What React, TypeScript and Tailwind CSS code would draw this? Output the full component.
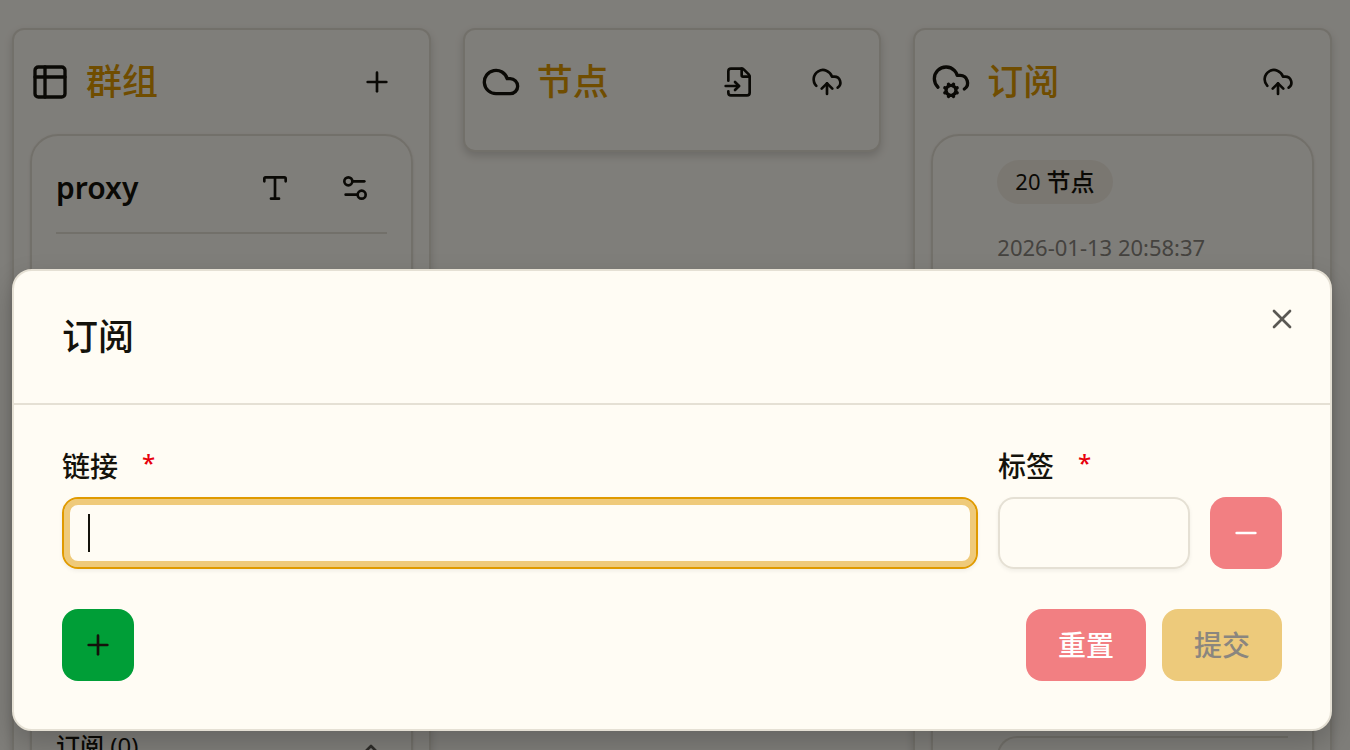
import type { ReactNode } from "react";
import {
  ChevronUp,
  Cloud,
  CloudCog,
  CloudUpload,
  FileInput,
  Minus,
  Plus,
  Settings2,
  Type,
  X,
} from "lucide-react";

function GroupIcon() {
  return (
    <svg
      viewBox="0 0 24 24"
      className="size-10"
      fill="none"
      stroke="currentColor"
      strokeWidth={2}
      strokeLinecap="round"
      strokeLinejoin="round"
      aria-hidden="true"
    >
      <rect x="3" y="3" width="18" height="18" rx="2" />
      <path d="M3 9h18" />
      <path d="M9 3v18" />
    </svg>
  );
}

function IconButton({ label, children }: { label: string; children: ReactNode }) {
  return (
    <button
      type="button"
      aria-label={label}
      className="flex size-[72px] items-center justify-center rounded-2xl"
    >
      {children}
    </button>
  );
}

function Column({
  icon,
  title,
  actions,
  children,
}: {
  icon: ReactNode;
  title: string;
  actions: ReactNode;
  children?: ReactNode;
}) {
  return (
    <section className="rounded-xl border-2 border-[#e5e0d4] bg-[#fffcf4] px-4 pb-4 shadow-[0_4px_8px_rgba(0,0,0,0.16)]">
      <div className="flex items-center justify-between py-4">
        <div className="flex items-center gap-4">
          {icon}
          <h2 className="text-4xl font-medium text-[#e09a00]">{title}</h2>
        </div>
        <div className="flex items-center gap-4">{actions}</div>
      </div>
      {children}
    </section>
  );
}

function FieldLabel({ htmlFor, children }: { htmlFor: string; children: ReactNode }) {
  return (
    <label htmlFor={htmlFor} className="flex gap-6 text-[28px] leading-[26px] font-medium">
      {children}
      <span className="text-2xl leading-5 font-medium text-[#e7000b]">*</span>
    </label>
  );
}

function Dialog() {
  return (
    <div
      role="dialog"
      aria-labelledby="dialog-title"
      className="relative w-full rounded-[20px] border-2 border-[#e5e0d4] bg-[#fffcf4] shadow-[0_12px_28px_rgba(0,0,0,0.2)]"
    >
      <header className="border-b-2 border-[#e5e0d4] p-12">
        <h2 id="dialog-title" className="text-4xl leading-9 font-medium">
          订阅
        </h2>
      </header>
      <button type="button" aria-label="关闭" className="absolute top-8 right-8 text-[#5a5853]">
        <X className="size-8" />
      </button>

      <form className="flex flex-col gap-10 p-12">
        <div className="flex items-end gap-5">
          <div className="flex flex-1 flex-col gap-[18px]">
            <FieldLabel htmlFor="link">链接</FieldLabel>
            <div className="relative">
              <input
                id="link"
                type="text"
                className="block h-[72px] w-full rounded-2xl border-2 border-[#e09a00] bg-transparent px-6 text-[28px] caret-transparent shadow-[inset_0_0_0_6px_#efca7a,0_2px_4px_rgba(0,0,0,0.06)] outline-none"
              />
              <span className="pointer-events-none absolute inset-y-0 left-[26px] my-auto h-[38px] w-0.5 bg-[#14120b]" />
            </div>
          </div>
          <div className="flex w-48 flex-col gap-[18px]">
            <FieldLabel htmlFor="tag">标签</FieldLabel>
            <input
              id="tag"
              type="text"
              className="block h-[72px] w-full rounded-2xl border-2 border-[#e5e0d4] bg-transparent px-6 text-[28px] shadow-[0_2px_4px_rgba(0,0,0,0.06)] outline-none"
            />
          </div>
          <button
            type="button"
            aria-label="删除"
            className="flex size-[72px] items-center justify-center rounded-2xl bg-[#f27f82] text-white"
          >
            <Minus className="size-8" />
          </button>
        </div>

        <div className="flex items-center justify-between">
          <button
            type="button"
            aria-label="添加"
            className="flex size-[72px] items-center justify-center rounded-2xl bg-[#009e37]"
          >
            <Plus className="size-8" />
          </button>
          <div className="flex gap-4 text-[28px] font-medium">
            <button type="reset" className="h-[72px] rounded-2xl bg-[#f27f82] px-8 text-white">
              重置
            </button>
            <button
              type="submit"
              disabled
              className="h-[72px] rounded-2xl bg-[#edca7b] px-8 text-[#8a867f]"
            >
              提交
            </button>
          </div>
        </div>
      </form>
    </div>
  );
}

export default function App() {
  return (
    <div className="relative h-screen overflow-hidden bg-[#fffcf4] font-['Noto_Sans','Noto_Sans_CJK_SC',sans-serif] text-[#14120b]">
      <main className="grid grid-cols-3 items-start gap-8 pt-7 pr-[18px] pl-3">
        <Column
          icon={<GroupIcon />}
          title="群组"
          actions={
            <IconButton label="新建群组">
              <Plus className="size-8" />
            </IconButton>
          }
        >
          <article className="rounded-[28px] border-2 border-[#e5e0d4] px-6 pt-5 shadow-sm">
            <div className="flex items-center justify-between border-b-2 border-[#e5e0d4] pb-3">
              <h3 className="text-3xl font-semibold">proxy</h3>
              <div className="flex gap-4">
                <button type="button" aria-label="重命名" className="flex size-16 items-center justify-center">
                  <Type className="size-8" />
                </button>
                <button type="button" aria-label="设置" className="flex size-16 items-center justify-center">
                  <Settings2 className="size-8" />
                </button>
              </div>
            </div>
            <div className="h-[500px]" />
            <button type="button" className="flex w-full items-start justify-between pb-8 text-2xl leading-6 font-medium">
              <span>
                订阅 <span className="font-normal">(0)</span>
              </span>
              <ChevronUp className="size-8 text-[#5a5853]" />
            </button>
          </article>
        </Column>

        <Column
          icon={<Cloud className="size-10" />}
          title="节点"
          actions={
            <>
              <IconButton label="导入">
                <FileInput className="size-8" />
              </IconButton>
              <IconButton label="上传节点">
                <CloudUpload className="size-8" />
              </IconButton>
            </>
          }
        />

        <Column
          icon={<CloudCog className="size-10" />}
          title="订阅"
          actions={
            <IconButton label="上传订阅">
              <CloudUpload className="size-8" />
            </IconButton>
          }
        >
          <article className="rounded-[28px] border-2 border-[#e5e0d4] py-6 pr-6 pl-16 shadow-sm">
            <span className="inline-flex h-11 items-center gap-1.5 rounded-full bg-[#f5efe3] px-[18px] text-2xl font-medium">
              <span className="text-[22px] font-normal">20</span>节点
            </span>
            <p className="pt-7 text-[22px] leading-[30px] text-[#8a867f]">2026-01-13 20:58:37</p>
            <div className="mt-[474px] h-40 rounded-l-[20px] border-2 border-r-0 border-[#e5e0d4]" />
          </article>
        </Column>
      </main>

      <div className="absolute inset-0 flex items-end bg-black/50 pr-[18px] pb-[19px] pl-3">
        <Dialog />
      </div>
    </div>
  );
}
